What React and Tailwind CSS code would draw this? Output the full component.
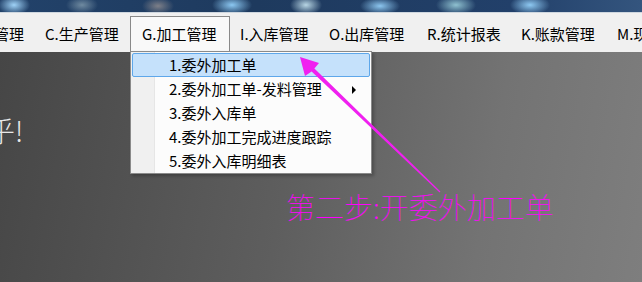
import React from "react";

const menus = [
  { label: "管理", w: "w-[51px]", pl: "pl-0", ml: "-ml-[6px]" },
  { label: "C.生产管理", w: "w-[85px]", pl: "pl-0" },
  { label: "G.加工管理", w: "w-[100px]", pl: "pl-[11px]", active: true },
  { label: "I.入库管理", w: "w-[89px]", pl: "pl-0" },
  { label: "O.出库管理", w: "w-[98px]", pl: "pl-0" },
  { label: "R.统计报表", w: "w-[94px]", pl: "pl-0" },
  { label: "K.账款管理", w: "w-[96px]", pl: "pl-0" },
  { label: "M.现金银行", w: "w-[100px]", pl: "pl-0" },
];

const items = [
  { label: "1.委外加工单", hover: true },
  { label: "2.委外加工单-发料管理", sub: true },
  { label: "3.委外入库单" },
  { label: "4.委外加工完成进度跟踪" },
  { label: "5.委外入库明细表" },
];

function Dropdown() {
  return (
    <div className="absolute left-[130px] top-[51px] w-[242px] h-[123px] border border-[#8a8a8a] bg-[#fcfcfc] shadow-[2px_2px_3px_rgba(0,0,0,0.25)] flex">
      <div className="w-[24px] bg-[#f0f0f0] border-r border-[#e6e6e6]" />
      <div className="absolute inset-x-[1px] top-[1px] flex flex-col">
        {items.map((it) => (
          <div
            key={it.label}
            className={
              "relative h-[24px] flex items-center pl-[36px] text-[15px] text-black " +
              (it.hover ? "bg-[#c5e1fb] border border-[#5ea7ea] rounded-[2px]" : "border border-transparent")
            }
          >
            {it.label}
            {it.sub && (
              <svg className="absolute right-[12px] top-[8px]" width="5" height="8" viewBox="0 0 5 8">
                <path d="M0 0 L4 4 L0 8 Z" fill="#000" />
              </svg>
            )}
          </div>
        ))}
      </div>
    </div>
  );
}

export default function App() {
  return (
    <div className="relative w-[642px] h-[282px] overflow-hidden flex flex-col font-['Microsoft_YaHei','Noto_Sans_CJK_SC',sans-serif]">
      <div className="h-[12px] bg-[radial-gradient(ellipse_16px_10px_at_14px_5px,#9fd2f7,transparent),radial-gradient(ellipse_16px_9px_at_82px_5px,#6f8aa0,transparent),radial-gradient(ellipse_16px_9px_at_158px_6px,#7d7f88,transparent),radial-gradient(ellipse_20px_10px_at_232px_5px,#8cc8f2,transparent),radial-gradient(ellipse_16px_10px_at_306px_5px,#b8d6e4,transparent),radial-gradient(ellipse_20px_9px_at_380px_6px,#8cc6ef,transparent),radial-gradient(ellipse_20px_10px_at_456px_5px,#8fc1d0,transparent),radial-gradient(ellipse_20px_10px_at_530px_5px,#8ec9f2,transparent),linear-gradient(90deg,#22426a,#1e3a5e_40%,#22406a_80%,#34557e)]" />
      <div className="h-px bg-[#cfd7df]" />
      <div className="h-[39px] bg-[#f0f0f0] flex items-stretch pt-[3px] whitespace-nowrap text-[15px] text-black">
        {menus.map((m) => (
          <div
            key={m.label}
            className={
              "shrink-0 flex items-center " + m.w + " " + m.pl + " " + (m.ml || "") + " " +
              (m.active ? "bg-[#f9f9f9] border border-b-0 border-[#8a8a8a] mr-[10px]" : "")
            }
          >
            {m.label}
          </div>
        ))}
      </div>
      <div className="flex-1 flex flex-col bg-[linear-gradient(100deg,#464646,#5e5e5e_45%,#737373_75%,#7e7e7e)]">
        <div className="mt-[63px] -ml-[13px] text-[28px] leading-[30px] text-[#e8e8e8] font-['Noto_Sans_CJK_SC',sans-serif] font-light">
          乎!
        </div>
        <div className="mt-[45px] ml-[286px] text-[29px] leading-[32px] text-[#ff00ff] font-['Noto_Sans_CJK_SC',sans-serif] font-thin whitespace-nowrap">
          第二步:开委外加工单
        </div>
      </div>
      <Dropdown />
      <svg className="absolute left-0 top-0 pointer-events-none" width="642" height="282">
        <polygon
          points="300,57 319,63 314.4,68.6 440.4,191.6 439.6,192.4 311.6,71.4 305,76"
          fill="#f020f0"
        />
      </svg>
    </div>
  );
}
